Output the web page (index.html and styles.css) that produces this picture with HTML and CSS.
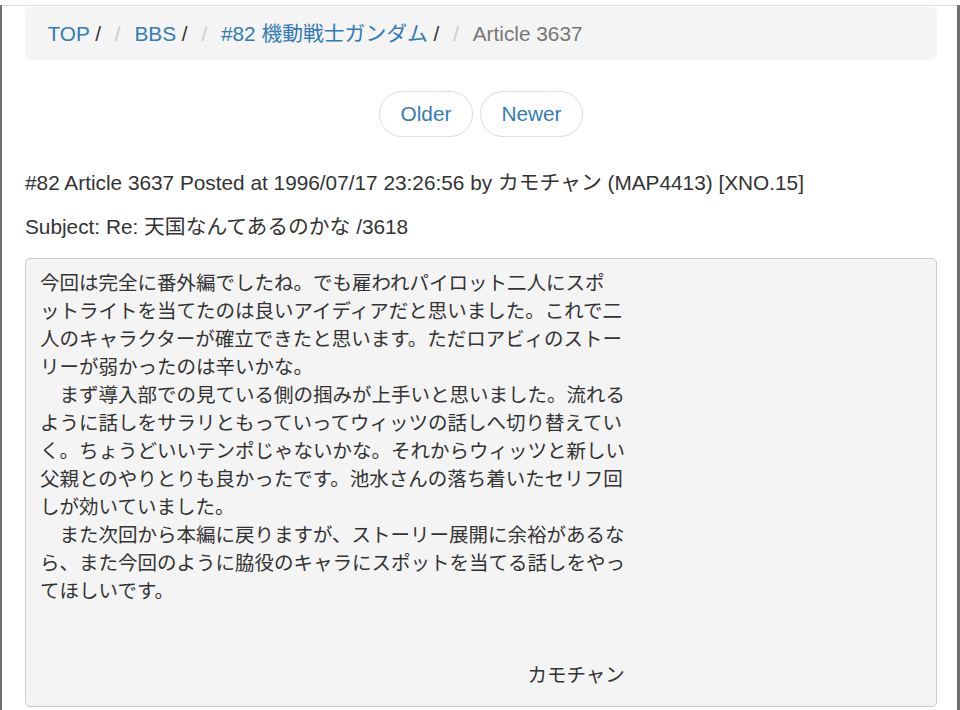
FILE: index.html
```html
<!DOCTYPE html>
<html lang="ja">
<head>
    <meta charset="UTF-8">
    <meta name="viewport" content="width=device-width, initial-scale=1.0">
    <title>Article 3637</title>
    <link rel="stylesheet" href="styles.css">
</head>
<body>
    <div class="page">
        <div class="container">
            <ol class="breadcrumb">
                <li><a href="#">TOP</a> /</li>
                <li><a href="#">BBS</a> /</li>
                <li><a href="#">#82 機動戦士ガンダム</a> /</li>
                <li class="active">Article 3637</li>
            </ol>

            <ul class="pager">
                <li><a href="#">Older</a></li>
                <li><a href="#">Newer</a></li>
            </ul>

            <p class="meta">#82 Article 3637 Posted at 1996/07/17 23:26:56 by カモチャン (MAP4413) [XNO.15]</p>
            <p class="subject">Subject: Re: 天国なんてあるのかな /3618</p>

<pre class="article">今回は完全に番外編でしたね。でも雇われパイロット二人にスポ
ットライトを当てたのは良いアイディアだと思いました。これで二
人のキャラクターが確立できたと思います。ただロアビィのストー
リーが弱かったのは辛いかな。
　まず導入部での見ている側の掴みが上手いと思いました。流れる
ように話しをサラリともっていってウィッツの話しへ切り替えてい
く。ちょうどいいテンポじゃないかな。それからウィッツと新しい
父親とのやりとりも良かったです。池水さんの落ち着いたセリフ回
しが効いていました。
　また次回から本編に戻りますが、ストーリー展開に余裕があるな
ら、また今回のように脇役のキャラにスポットを当てる話しをやっ
てほしいです。


　　　　　　　　　　　　　　　　　　　　　　　　　カモチャン</pre>
        </div>
    </div>
</body>
</html>
```

FILE: styles.css
```css
* {
    box-sizing: border-box;
}
html, body {
    margin: 0;
    padding: 0;
}
body {
    font-family: "Liberation Sans", Arial, "Noto Sans CJK JP", sans-serif;
    font-size: 20.8px;
    line-height: 1.42857;
    color: #333;
    background-color: #fff;
    overflow: hidden;
}
a {
    color: #337ab7;
    text-decoration: none;
}
.page {
    min-height: 100vh;
    border-left: 2px solid #707070;
    border-right: 3px solid #707070;
}
.container {
    margin-top: 5px;
    border-top: 1px solid #ddd;
    padding: 1px 20px 0 23px;
}
.breadcrumb {
    list-style: none;
    margin: 0 0 31px;
    padding: 11.6px 22.5px;
    background-color: #f4f4f4;
    border-radius: 6px;
}
.breadcrumb li {
    display: inline-block;
}
.breadcrumb li + li::before {
    content: "/\00a0";
    padding: 0 8px;
    color: #ccc;
}
.breadcrumb .active {
    color: #777;
}
.pager {
    list-style: none;
    margin: 0 0 31px;
    padding: 0;
    display: flex;
    justify-content: center;
    gap: 7px;
}
.pager a {
    display: inline-block;
    padding: 7.1px 20.5px;
    border: 1px solid #ddd;
    border-radius: 23px;
    background-color: #fff;
}
.meta {
    margin: 0 0 15px;
}
.subject {
    margin: 0 0 16px;
}
.article {
    margin: 0;
    padding: 10px 14px 17px;
    font-family: "Liberation Sans", Arial, "Noto Sans CJK JP", sans-serif;
    font-size: 19.5px;
    line-height: 28px;
    color: #333;
    background-color: #f4f4f4;
    border: 1px solid #ccc;
    border-radius: 5px;
    white-space: pre-wrap;
}
```
